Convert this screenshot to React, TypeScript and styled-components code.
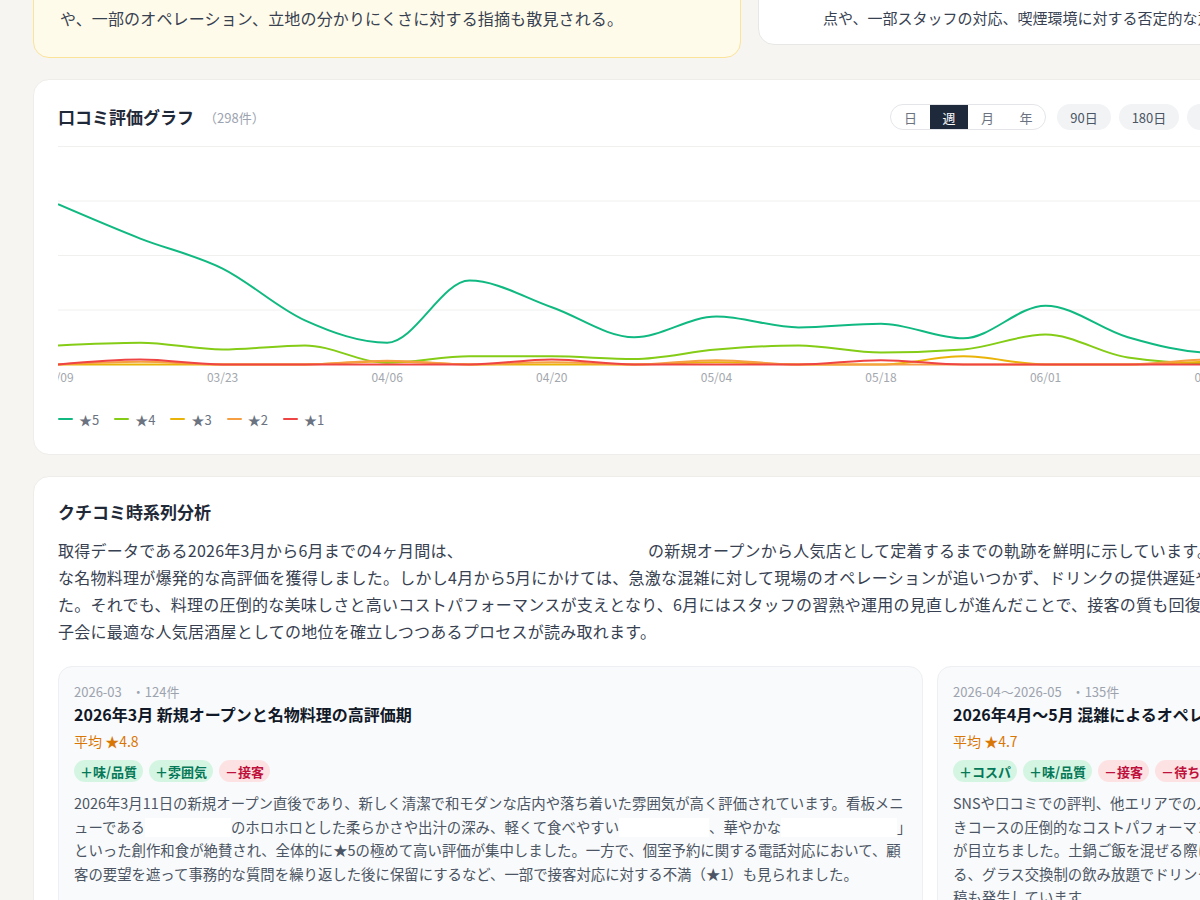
import React from 'react';
import styled, { createGlobalStyle } from 'styled-components';
import { Download } from 'lucide-react';

const GlobalStyle = createGlobalStyle`
    html, body {
        margin: 0;
        padding: 0;
        overflow: hidden;
        background: #f6f5f2;
    }
    body {
        font-family: "Noto Sans CJK JP", "Noto Sans", sans-serif;
        color: #1f2937;
    }
`

const Page = styled.div`
    width: 1433px;
    padding: 0 33px 40px;
    margin-top: -20px;
    display: flex;
    flex-direction: column;
    gap: 21px;
`

const SummaryRow = styled.div`
    display: grid;
    grid-template-columns: 1fr 1fr;
    gap: 17px;
    align-items: start;
`

const SummaryCard = styled.div<{ $warn?: boolean }>`
    border-radius: 16px;
    border: 1px solid ${props => props.$warn ? '#fbe39a' : '#e7e7e5'};
    background: ${props => props.$warn ? '#fffbea' : '#ffffff'};
    padding: ${props => props.$warn ? '24px 26px 25px' : '24px 24px 13px'};
`

const SummaryText = styled.p<{ $small?: boolean }>`
    margin: 0;
    font-size: ${props => props.$small ? '15px' : '16px'};
    letter-spacing: ${props => props.$small ? '0' : '0.15px'};
    line-height: 1.7;
    color: #374151;
    white-space: nowrap;
    overflow: hidden;
`

const Card = styled.section`
    background: #ffffff;
    border: 1px solid #eeede9;
    border-radius: 16px;
    padding: 24px 24px 26px;
    overflow: hidden;
`

const CardHeader = styled.div`
    display: flex;
    align-items: center;
    height: 26px;
`

const CardTitle = styled.h2`
    margin: 0;
    font-size: 17px;
    line-height: 22px;
    font-weight: 700;
    color: #1f2937;
`

const Count = styled.span`
    margin-left: 10px;
    font-size: 13px;
    color: #9ca3af;
`

const Controls = styled.div`
    margin-left: auto;
    display: flex;
    align-items: center;
    gap: 8px;
`

const Segmented = styled.div`
    display: flex;
    height: 26px;
    border: 1px solid #e3e5e8;
    border-radius: 14px;
    overflow: hidden;
    margin-right: 3px;
    box-sizing: border-box;
`

const SegButton = styled.button<{ $active?: boolean }>`
    width: 38.5px;
    border: none;
    padding: 0;
    font-family: inherit;
    font-size: 13px;
    background: ${props => props.$active ? '#1e293b' : 'transparent'};
    color: ${props => props.$active ? '#ffffff' : '#6b7280'};
`

const RangePill = styled.button`
    height: 26px;
    padding: 0 13px;
    border: none;
    border-radius: 13px;
    background: #f1f3f5;
    color: #4b5563;
    font-family: inherit;
    font-size: 13px;
`

const IconPill = styled.button`
    width: 26px;
    height: 26px;
    padding: 0;
    border: none;
    border-radius: 13px;
    background: #f1f3f5;
    color: #4b5563;
    display: flex;
    align-items: center;
    justify-content: center;
`

const ChartBox = styled.div`
    margin-top: 16px;
    height: 244px;
    svg {
        display: block;
    }
`

const Legend = styled.div`
    margin-top: 20px;
    display: flex;
    align-items: center;
    gap: 15px;
    height: 18px;
`

const LegendItem = styled.div`
    display: flex;
    align-items: center;
    gap: 6px;
    font-size: 13px;
    color: #6b7280;
`

const Swatch = styled.span<{ $color: string }>`
    width: 15px;
    height: 2.5px;
    border-radius: 1px;
    background: ${props => props.$color};
`

const SectionTitle = styled.h2`
    margin: 0;
    font-size: 17px;
    line-height: 22px;
    font-weight: 700;
    color: #1f2937;
`

const Lead = styled.p`
    margin: 14px 0 0;
    font-size: 16px;
    line-height: 27px;
    letter-spacing: 0.25px;
    color: #374151;
    white-space: nowrap;
`

const Blank = styled.span<{ $w: number }>`
    display: inline-block;
    width: ${props => props.$w}px;
    height: 1.35em;
    vertical-align: -0.32em;
    background: #ffffff;
`

const PeriodRow = styled.div`
    margin-top: 21px;
    display: flex;
    gap: 14px;
`

const PeriodCard = styled.article`
    flex: 0 0 865px;
    box-sizing: border-box;
    background: #f9fafb;
    border: 1px solid #edeff2;
    border-radius: 14px;
    padding: 16px 15px 18px;
    overflow: hidden;
`

const PeriodMeta = styled.div`
    font-size: 13px;
    line-height: 18px;
    color: #9ca3af;
    span {
        margin-left: 10px;
    }
`

const PeriodTitle = styled.h3`
    margin: 2px 0 0;
    font-size: 16px;
    line-height: 22px;
    font-weight: 700;
    color: #111827;
    white-space: nowrap;
`

const Average = styled.div`
    margin-top: 6px;
    font-size: 14px;
    line-height: 20px;
    color: #d97706;
`

const Tags = styled.div`
    margin-top: 9px;
    display: flex;
    gap: 6px;
`

const Tag = styled.span<{ $positive: boolean }>`
    height: 22px;
    padding: 0 6px;
    border-radius: 11px;
    display: inline-flex;
    align-items: center;
    font-size: 13px;
    font-weight: 700;
    white-space: nowrap;
    background: ${props => props.$positive ? '#d5f5e3' : '#fde2e4'};
    color: ${props => props.$positive ? '#047857' : '#be123c'};
`

const PeriodBody = styled.p`
    margin: 9px 0 0;
    font-size: 14.4px;
    line-height: 23.5px;
    color: #4b5563;
    white-space: nowrap;
    overflow: hidden;
`

// ---- chart ----

const STEP = 82.3;
const UNIT = 5.45;
const PLOT_H = 218;
const weeks = ['03/09', '03/16', '03/23', '03/30', '04/06', '04/13', '04/20', '04/27', '05/04', '05/11', '05/18', '05/25', '06/01', '06/08', '06/15', '06/22'];

const series = [
    { label: '★5', color: '#10b981', data: [29.4, 23.1, 17.6, 8.1, 4.0, 15.4, 10.5, 5.0, 8.8, 6.8, 7.5, 4.8, 10.8, 5.0, 2.2, 3] },
    { label: '★4', color: '#84cc16', data: [3.5, 4.0, 2.75, 3.5, 0.3, 1.5, 1.5, 1.0, 2.75, 3.5, 2.2, 2.75, 5.5, 1.3, 0.2, 0.5] },
    { label: '★3', color: '#eab308', data: [0, 0, 0, 0, 0.6, 0, 0, 0, 0.4, 0, 0, 1.5, 0, 0, 0.5, 0] },
    { label: '★2', color: '#f59e42', data: [0, 0.5, 0, 0, 0.7, 0, 0.4, 0, 0.8, 0, 0, 0, 0, 0, 0.9, 0.5] },
    { label: '★1', color: '#ef4444', data: [0, 0.9, 0, 0, 0, 0, 0.9, 0, 0, 0, 0.8, 0, 0, 0, 0, 0] },
];

const sign = (x: number) => (x < 0 ? -1 : 1);

// monotone cubic curve, same idea as d3.curveMonotoneX
function smoothPath(pts: [number, number][]) {
    const n = pts.length;
    const t: number[] = new Array(n).fill(0);
    for (let i = 1; i < n - 1; i++) {
        const [x0, y0] = pts[i - 1];
        const [x1, y1] = pts[i];
        const [x2, y2] = pts[i + 1];
        const h0 = x1 - x0, h1 = x2 - x1;
        const s0 = (y1 - y0) / h0, s1 = (y2 - y1) / h1;
        const p = (s0 * h1 + s1 * h0) / (h0 + h1);
        t[i] = (sign(s0) + sign(s1)) * Math.min(Math.abs(s0), Math.abs(s1), 0.5 * Math.abs(p)) || 0;
    }
    const h = pts[1][0] - pts[0][0];
    t[0] = (3 * (pts[1][1] - pts[0][1]) / h - t[1]) / 2;
    const hl = pts[n - 1][0] - pts[n - 2][0];
    t[n - 1] = (3 * (pts[n - 1][1] - pts[n - 2][1]) / hl - t[n - 2]) / 2;

    let d = `M${pts[0][0]},${pts[0][1]}`;
    for (let i = 0; i < n - 1; i++) {
        const [x0, y0] = pts[i];
        const [x1, y1] = pts[i + 1];
        const dx = (x1 - x0) / 3;
        d += ` C${x0 + dx},${y0 + dx * t[i]} ${x1 - dx},${y1 - dx * t[i + 1]} ${x1},${y1}`;
    }
    return d;
}

function RatingChart() {
    const yOf = (v: number) => PLOT_H + 0.5 - v * UNIT;
    const grid = [0, 10, 20, 30, 40];

    return (
        <ChartBox>
            <svg width="100%" height="244">
                {grid.map(g => (
                    <line key={g} x1={0} x2={1400} y1={yOf(g)} y2={yOf(g)} stroke="#f0f0ef" strokeWidth={1} />
                ))}
                {series.map(s => (
                    <path
                        key={s.label}
                        d={smoothPath(s.data.map((v, i) => [i * STEP, yOf(v)] as [number, number]))}
                        fill="none"
                        stroke={s.color}
                        strokeWidth={2}
                    />
                ))}
                {weeks.map((w, i) => i % 2 === 0 && (
                    <text key={w} x={i * STEP} y={236} textAnchor="middle" fontSize={12} fill="#a3a7ae">{w}</text>
                ))}
            </svg>
        </ChartBox>
    );
}

// ---- periods ----

type Period = {
    range: string;
    count: number;
    title: string;
    avg: string;
    tags: { label: string; positive: boolean }[];
    body: React.ReactNode;
};

const periods: Period[] = [
    {
        range: '2026-03',
        count: 124,
        title: '2026年3月 新規オープンと名物料理の高評価期',
        avg: '4.8',
        tags: [
            { label: '味/品質', positive: true },
            { label: '雰囲気', positive: true },
            { label: '接客', positive: false },
        ],
        body: (
            <>
                2026年3月11日の新規オープン直後であり、新しく清潔で和モダンな店内や落ち着いた雰囲気が高く評価されています。看板メニ<br />
                ューである<Blank $w={86} />のホロホロとした柔らかさや出汁の深み、軽くて食べやすい<Blank $w={90} />、華やかな<Blank $w={116} />」<br />
                といった創作和食が絶賛され、全体的に★5の極めて高い評価が集中しました。一方で、個室予約に関する電話対応において、顧<br />
                客の要望を遮って事務的な質問を繰り返した後に保留にするなど、一部で接客対応に対する不満（★1）も見られました。
            </>
        ),
    },
    {
        range: '2026-04〜2026-05',
        count: 135,
        title: '2026年4月〜5月 混雑によるオペレーション課題期',
        avg: '4.7',
        tags: [
            { label: 'コスパ', positive: true },
            { label: '味/品質', positive: true },
            { label: '接客', positive: false },
            { label: '待ち時間', positive: false },
        ],
        body: (
            <>
                SNSや口コミでの評判、他エリアでの人気を背景に予約が急増し、週末を中心に満席が続きました。飲み放題付<br />
                きコースの圧倒的なコストパフォーマンスは引き続き高く評価される一方で、ドリンク提供の遅れや待ち時間の長さ<br />
                が目立ちました。土鍋ご飯を混ぜる際に店員が来ないまま放置されたという声や、スタッフ間の連携不足を指摘す<br />
                る、グラス交換制の飲み放題でドリンクがなかなか届かないといった不満が重なり、★2〜★3の辛口評価の投<br />
                稿も発生しています。
            </>
        ),
    },
    {
        range: '2026-06',
        count: 39,
        title: '2026年6月 運用改善と評価の回復期',
        avg: '4.6',
        tags: [
            { label: '味/品質', positive: true },
            { label: '接客', positive: true },
        ],
        body: (
            <>
                スタッフの習熟や運用の見直しが進み、提供スピードや接客の丁寧さを評価する声が増えています。
            </>
        ),
    },
];

export default function App() {
    return (
        <>
            <GlobalStyle />
            <Page>
                <SummaryRow>
                    <SummaryCard $warn>
                        <SummaryText>や、一部のオペレーション、立地の分かりにくさに対する指摘も散見される。</SummaryText>
                    </SummaryCard>
                    <SummaryCard>
                        <SummaryText $small><Blank $w={40} />点や、一部スタッフの対応、喫煙環境に対する否定的な意見も見られる。</SummaryText>
                    </SummaryCard>
                </SummaryRow>

                <Card>
                    <CardHeader>
                        <CardTitle>口コミ評価グラフ</CardTitle>
                        <Count>（298件）</Count>
                        <Controls>
                            <Segmented>
                                <SegButton>日</SegButton>
                                <SegButton $active>週</SegButton>
                                <SegButton>月</SegButton>
                                <SegButton>年</SegButton>
                            </Segmented>
                            <RangePill>90日</RangePill>
                            <RangePill>180日</RangePill>
                            <RangePill>365日</RangePill>
                            <RangePill>全期間</RangePill>
                            <RangePill>カスタム</RangePill>
                            <IconPill aria-label="CSVを出力"><Download size={14} /></IconPill>
                        </Controls>
                    </CardHeader>
                    <RatingChart />
                    <Legend>
                        {series.map(s => (
                            <LegendItem key={s.label}>
                                <Swatch $color={s.color} />
                                {s.label}
                            </LegendItem>
                        ))}
                    </Legend>
                </Card>

                <Card>
                    <SectionTitle>クチコミ時系列分析</SectionTitle>
                    <Lead>
                        取得データである2026年3月から6月までの4ヶ月間は、<Blank $w={185} />の新規オープンから人気店として定着するまでの軌跡を鮮明に示しています。3月のオープン直後は、個性的<br />
                        な名物料理が爆発的な高評価を獲得しました。しかし4月から5月にかけては、急激な混雑に対して現場のオペレーションが追いつかず、ドリンクの提供遅延や接客への不満が目立ちまし<br />
                        た。それでも、料理の圧倒的な美味しさと高いコストパフォーマンスが支えとなり、6月にはスタッフの習熟や運用の見直しが進んだことで、接客の質も回復傾向にあります。デートや女<br />
                        子会に最適な人気居酒屋としての地位を確立しつつあるプロセスが読み取れます。
                    </Lead>
                    <PeriodRow>
                        {periods.map(p => (
                            <PeriodCard key={p.range}>
                                <PeriodMeta>{p.range}<span>・{p.count}件</span></PeriodMeta>
                                <PeriodTitle>{p.title}</PeriodTitle>
                                <Average>平均 ★{p.avg}</Average>
                                <Tags>
                                    {p.tags.map(t => (
                                        <Tag key={t.label} $positive={t.positive}>
                                            {t.positive ? '＋' : '－'}{t.label}
                                        </Tag>
                                    ))}
                                </Tags>
                                <PeriodBody>{p.body}</PeriodBody>
                            </PeriodCard>
                        ))}
                    </PeriodRow>
                </Card>
            </Page>
        </>
    );
}
